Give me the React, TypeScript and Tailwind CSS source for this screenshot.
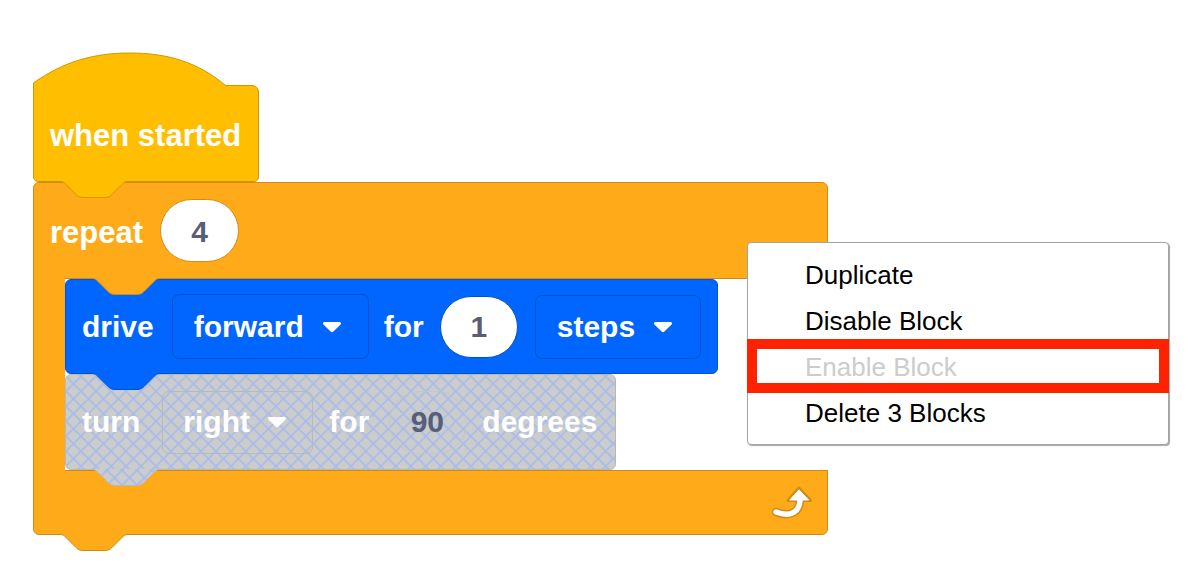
import React from "react";

// crosshatch texture used for the disabled block
const HatchDefs = ({ id }: { id: string }) => (
  <defs>
    <pattern
      id={id}
      width="10.6"
      height="10.6"
      patternUnits="userSpaceOnUse"
      patternTransform="rotate(45)"
    >
      <rect width="10.6" height="10.6" fill="#cccccc" />
      <rect width="1.7" height="10.6" fill="#a6bdec" />
      <rect width="10.6" height="1.7" fill="#a6bdec" />
    </pattern>
  </defs>
);

// the little tab that hangs under a block and fills the next one's notch
const Tab = ({
  fill,
  stroke,
  hatched,
  className = "top-full left-[26px]",
}: {
  fill: string;
  stroke: string;
  hatched?: boolean;
  className?: string;
}) => (
  <svg
    className={`absolute z-10 overflow-visible ${className}`}
    width="68"
    height="18"
    viewBox="0 0 68 18"
  >
    {hatched && <HatchDefs id="hatch-tab" />}
    <path
      d="M0 0 H68 V0.5 C65 0.5 64 1.5 62 3.5 L52 13.5 C50 15.5 48 16.5 45 16.5 H23 C20 16.5 18 15.5 16 13.5 L6 3.5 C4 1.5 3 0.5 0 0.5 Z"
      fill={hatched ? "url(#hatch-tab)" : fill}
    />
    <path
      d="M0 0.5 C3 0.5 4 1.5 6 3.5 L16 13.5 C18 15.5 20 16.5 23 16.5 H45 C48 16.5 50 15.5 52 13.5 L62 3.5 C64 1.5 65 0.5 68 0.5"
      fill="none"
      stroke={stroke}
    />
  </svg>
);

const Caret = () => (
  <svg width="20" height="12" viewBox="0 0 20 12">
    <path
      d="M2.5 1 H17.5 C19 1 19.6 2.6 18.6 3.6 L11.4 10.6 C10.6 11.4 9.4 11.4 8.6 10.6 L1.4 3.6 C0.4 2.6 1 1 2.5 1 Z"
      fill="#fff"
    />
  </svg>
);

const LoopIcon = () => (
  <svg width="42" height="36" viewBox="0 0 42 36">
    <path d="M30 15 C30 26 21 33 6 27" stroke="#cf8b17" strokeWidth="8.5" fill="none" strokeLinecap="round" />
    <path d="M29 3 L40.5 15.5 L18 15.5 Z" fill="#cf8b17" stroke="#cf8b17" strokeWidth="3" strokeLinejoin="round" />
    <path d="M30 15 C30 26 21 33 6 27" stroke="#fff" strokeWidth="5.5" fill="none" strokeLinecap="round" />
    <path d="M29 4.8 L38.6 15 L19.8 15 Z" fill="#fff" stroke="#fff" strokeWidth="1" strokeLinejoin="round" />
  </svg>
);

const menuItems = [
  { label: "Duplicate", off: false },
  { label: "Disable Block", off: false },
  { label: "Enable Block", off: true },
  { label: "Delete 3 Blocks", off: false },
];

export default function App() {
  return (
    <div className="relative w-[1196px] h-[580px] overflow-hidden bg-white font-['Liberation_Sans',Arial,sans-serif]">
      {/* script on the canvas */}
      <div className="absolute left-[33px] top-[52px] flex flex-col items-start text-[30px] font-bold text-white leading-none">
        {/* when started */}
        <div className="relative pt-[33px]">
          <svg className="absolute left-0 top-0 z-10" width="194" height="36" viewBox="0 0 194 36">
            <path d="M0 36 V31 C30 10 60 1 97 1 C134 1 165 10 192.5 33.5 V36 Z" fill="#ffbf00" />
            <path d="M0.5 36 V31 C30 10 60 1 97 1 C134 1 165 10 192.5 33.5" fill="none" stroke="#cc9900" />
          </svg>
          <div className="relative w-[226px] h-[97px] flex items-center pl-[16px] pt-[3px] text-[31px] bg-[#ffbf00] border border-[#cc9900] rounded-tr-[7px] rounded-b-[5px]">
            when started
            <Tab fill="#ffbf00" stroke="#cc9900" />
          </div>
        </div>

        {/* repeat */}
        <div className="relative w-[795px] flex flex-col bg-[#ffab19] border border-[#cf8b17] rounded-[6px]">
          <div className="h-[95px] flex items-center pl-[16px]">
            <span className="pt-[3px] text-[31px]">repeat</span>
            <div className="ml-[17px] w-[79px] h-[63px] rounded-full bg-white border border-[#cf8b17] flex items-center justify-center text-[#575e75] pt-[2px]">
              4
            </div>
          </div>

          <div className="relative ml-[31px] -mr-px flex flex-col items-start bg-white border-y border-[#cf8b17]">
            <Tab fill="#ffab19" stroke="#cf8b17" className="-top-px left-[27px]" />

            {/* drive */}
            <div className="relative w-[653px] h-[95px] flex items-center pl-[16px] bg-[#0066ff] border border-[#0054d0] rounded-[6px]">
              <span>drive</span>
              <div className="ml-[18px] w-[197px] h-[65px] flex items-center gap-[18px] pl-[21px] border border-[#0052c4] rounded-[7px]">
                forward
                <Caret />
              </div>
              <span className="ml-[15px]">for</span>
              <div className="ml-[16px] w-[78px] h-[62px] rounded-full bg-white border border-[#0052c4] flex items-center justify-center text-[#575e75]">
                1
              </div>
              <div className="ml-[17px] w-[166px] h-[64px] flex items-center gap-[18px] pl-[21px] border border-[#0052c4] rounded-[7px]">
                steps
                <Caret />
              </div>
              <Tab fill="#0066ff" stroke="#0054d0" />
            </div>

            {/* turn (disabled) */}
            <div className="relative w-[551px] h-[96px] flex items-center pl-[16px] bg-[#cccccc] border border-[#b8b8b8] rounded-[6px]">
              <div className="absolute inset-0 rounded-[5px] overflow-hidden">
                <svg width="100%" height="100%">
                  <HatchDefs id="hatch-body" />
                  <rect width="100%" height="100%" fill="url(#hatch-body)" />
                </svg>
              </div>
              <span className="relative">turn</span>
              <div className="relative ml-[22px] w-[151px] h-[63px] flex items-center gap-[17px] pl-[20px] border border-[#b9b9b9] rounded-[7px]">
                right
                <Caret />
              </div>
              <span className="relative ml-[16px]">for</span>
              <div className="relative ml-[20px] w-[78px] h-[63px] rounded-full border border-[#c6c6c6] flex items-center justify-center text-[#575e75] pr-[2px]">
                90
              </div>
              <span className="relative ml-[15px]">degrees</span>
              <Tab fill="#cccccc" stroke="#b8b8b8" hatched />
            </div>
          </div>

          <div className="h-[63px] flex items-center justify-end pr-[15px]">
            <LoopIcon />
          </div>
          <Tab fill="#ffab19" stroke="#cf8b17" />
        </div>
      </div>

      {/* context menu */}
      <div className="absolute left-[747px] top-[242px] w-[422px] h-[203px] bg-white border border-[#a3a3a3] rounded-[4px] shadow-[1px_1px_1px_rgba(0,0,0,0.35)] py-[9px] text-[26px] leading-none">
        {menuItems.map((item) => (
          <div
            key={item.label}
            className={`h-[46px] flex items-center pl-[57px] ${item.off ? "text-[#cccccc]" : "text-black"}`}
          >
            {item.label}
          </div>
        ))}
      </div>
      <div className="absolute left-[747px] top-[339px] w-[422px] h-[54px] border-[10px] border-[#ff2200]" />
    </div>
  );
}
